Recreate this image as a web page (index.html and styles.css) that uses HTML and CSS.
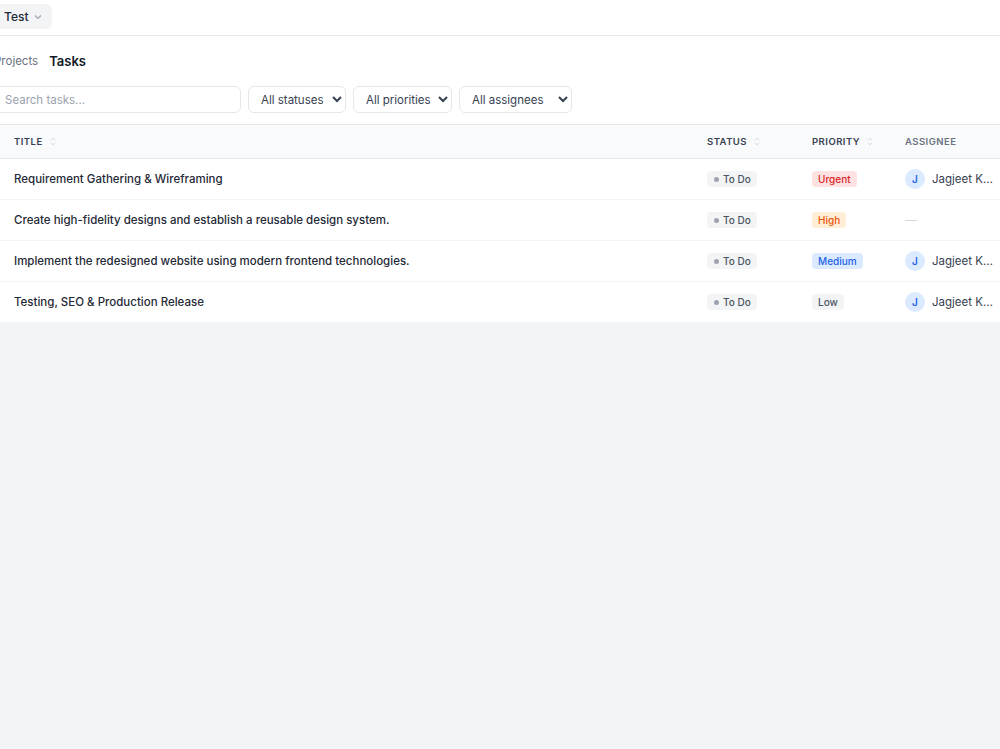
FILE: index.html
```html
<!DOCTYPE html>
<html lang="en">
<head>
    <meta charset="UTF-8">
    <meta name="viewport" content="width=device-width, initial-scale=1.0">
    <title>Tasks</title>
    <link rel="stylesheet" href="styles.css">
</head>
<body>

<div class="app">
    <div class="topbar">
        <button class="workspace">Test
            <svg width="10" height="10" viewBox="0 0 10 10"><path d="M2 3.5 L5 6.5 L8 3.5" fill="none" stroke="#9ca3af" stroke-width="1.1"/></svg>
        </button>
    </div>

    <div class="panel">
        <div class="crumbs">
            <span class="crumb">Projects</span>
            <span class="crumb current">Tasks</span>
        </div>

        <div class="filters">
            <input type="text" class="search" placeholder="Search tasks...">
            <select class="filter f-status"><option>All statuses</option></select>
            <select class="filter f-priority"><option>All priorities</option></select>
            <select class="filter f-assignee"><option>All assignees</option></select>
        </div>

        <table class="tasks">
            <colgroup>
                <col class="c-title">
                <col class="c-status">
                <col class="c-priority">
                <col class="c-assignee">
            </colgroup>
            <thead>
                <tr>
                    <th class="first sortable">Title <svg class="sort" width="6" height="9" viewBox="0 0 6 9"><path d="M1 3.2 L3 1.2 L5 3.2 M1 5.8 L3 7.8 L5 5.8" fill="none" stroke="#d1d5db" stroke-width="1"/></svg></th>
                    <th class="sortable">Status <svg class="sort" width="6" height="9" viewBox="0 0 6 9"><path d="M1 3.2 L3 1.2 L5 3.2 M1 5.8 L3 7.8 L5 5.8" fill="none" stroke="#d1d5db" stroke-width="1"/></svg></th>
                    <th class="sortable">Priority <svg class="sort" width="6" height="9" viewBox="0 0 6 9"><path d="M1 3.2 L3 1.2 L5 3.2 M1 5.8 L3 7.8 L5 5.8" fill="none" stroke="#d1d5db" stroke-width="1"/></svg></th>
                    <th>Assignee</th>
                </tr>
            </thead>
            <tbody>
                <tr>
                    <td class="first title">Requirement Gathering &amp; Wireframing</td>
                    <td><span class="status"><i class="dot"></i>To Do</span></td>
                    <td><span class="prio urgent">Urgent</span></td>
                    <td><div class="assignee"><span class="avatar">J</span><span class="name">Jagjeet Kaur Sandhu</span></div></td>
                </tr>
                <tr>
                    <td class="first title">Create high-fidelity designs and establish a reusable design system.</td>
                    <td><span class="status"><i class="dot"></i>To Do</span></td>
                    <td><span class="prio high">High</span></td>
                    <td><span class="none">—</span></td>
                </tr>
                <tr>
                    <td class="first title">Implement the redesigned website using modern frontend technologies.</td>
                    <td><span class="status"><i class="dot"></i>To Do</span></td>
                    <td><span class="prio medium">Medium</span></td>
                    <td><div class="assignee"><span class="avatar">J</span><span class="name">Jagjeet Kaur Sandhu</span></div></td>
                </tr>
                <tr>
                    <td class="first title">Testing, SEO &amp; Production Release</td>
                    <td><span class="status"><i class="dot"></i>To Do</span></td>
                    <td><span class="prio low">Low</span></td>
                    <td><div class="assignee"><span class="avatar">J</span><span class="name">Jagjeet Kaur Sandhu</span></div></td>
                </tr>
            </tbody>
        </table>
    </div>
</div>

</body>
</html>
```

FILE: styles.css
```css
body {
    font-family: 'Inter', 'Noto Sans', sans-serif;
    background-color: #f3f4f6;
    margin: 0;
    overflow: hidden;
    color: #1f2937;
}
.app {
    margin-left: -6px;
    width: 1200px;
}
.topbar {
    height: 35px;
    background-color: white;
    border-bottom: 1px solid #e5e7eb;
    display: flex;
    align-items: center;
}
.workspace {
    display: flex;
    align-items: center;
    gap: 4px;
    height: 25px;
    margin-top: -2px;
    padding: 0 9px 0 10px;
    background-color: #f3f4f6;
    border: none;
    border-radius: 6px;
    font-family: inherit;
    font-size: 12px;
    font-weight: 500;
    color: #1f2937;
}
.panel {
    background-color: white;
}
.crumbs {
    display: flex;
    align-items: center;
    gap: 11px;
    padding-top: 15px;
    height: 20px;
}
.crumb {
    font-size: 11.5px;
    color: #6b7280;
}
.crumb.current {
    font-size: 13px;
    font-weight: 600;
    color: #111827;
}
.filters {
    display: flex;
    gap: 7px;
    margin-top: 15px;
    margin-bottom: 11px;
}
.search {
    width: 247px;
    height: 27px;
    box-sizing: border-box;
    padding: 0 10px;
    border: 1px solid #e5e7eb;
    border-radius: 6px;
    font-family: inherit;
    font-size: 11.5px;
    color: #1f2937;
}
.search::placeholder {
    color: #9ca3af;
}
.filter {
    height: 27px;
    box-sizing: border-box;
    padding: 0 4px 0 8px;
    border: 1px solid #e5e7eb;
    border-radius: 6px;
    background-color: white;
    font-family: inherit;
    font-size: 11.5px;
    color: #374151;
}
.f-status { width: 98px; }
.f-priority { width: 99px; }
.f-assignee { width: 113px; }
.tasks {
    width: 1200px;
    border-collapse: collapse;
    table-layout: fixed;
}
.c-title { width: 701px; }
.c-status { width: 105px; }
.c-priority { width: 93px; }
.tasks th {
    background-color: #f9fafb;
    border-top: 1px solid #e5e7eb;
    border-bottom: 1px solid #e5e7eb;
    height: 33px;
    padding: 0 12px;
    text-align: left;
    font-size: 9.5px;
    font-weight: 600;
    text-transform: uppercase;
    letter-spacing: 0.05em;
    color: #6b7280;
}
.tasks th.sortable {
    color: #374151;
}
.sort {
    margin-left: 4px;
    vertical-align: -1px;
}
.tasks td {
    height: 40px;
    padding: 0 12px;
    border-bottom: 1px solid #f3f4f6;
    font-size: 11.5px;
}
.tasks .first {
    padding-left: 20px;
}
.title {
    font-weight: 500;
    color: #1f2937;
}
.status {
    display: inline-flex;
    align-items: center;
    gap: 4px;
    height: 16px;
    padding: 0 6px 0 7px;
    background-color: #f3f4f6;
    border-radius: 4px;
    font-size: 10px;
    font-weight: 500;
    color: #4b5563;
}
.dot {
    width: 5px;
    height: 5px;
    border-radius: 50%;
    background-color: #9ca3af;
}
.prio {
    display: inline-flex;
    align-items: center;
    height: 16px;
    padding: 0 6px;
    border-radius: 4px;
    font-size: 10px;
    font-weight: 500;
}
.urgent { background-color: #fee2e2; color: #dc2626; }
.high { background-color: #ffedd5; color: #ea580c; }
.medium { background-color: #dbeafe; color: #2563eb; }
.low { background-color: #f3f4f6; color: #4b5563; }
.assignee {
    display: flex;
    align-items: center;
    gap: 7px;
}
.avatar {
    width: 20px;
    height: 20px;
    border-radius: 50%;
    background-color: #dbeafe;
    color: #2563eb;
    font-size: 10px;
    font-weight: 600;
    display: flex;
    align-items: center;
    justify-content: center;
}
.name {
    max-width: 62px;
    overflow: hidden;
    white-space: nowrap;
    text-overflow: ellipsis;
    color: #374151;
}
.none {
    color: #d1d5db;
}
```
